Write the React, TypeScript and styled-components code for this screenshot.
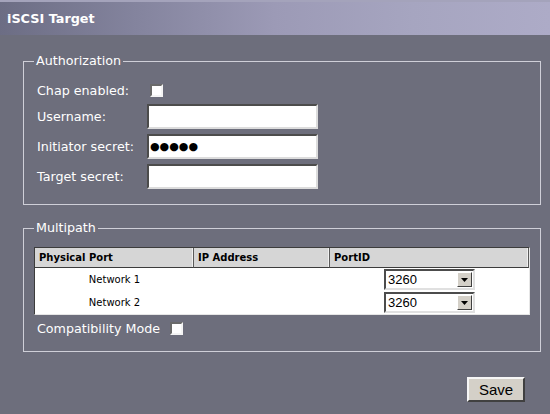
import React from "react";
import styled, { createGlobalStyle } from "styled-components";

const GlobalStyle = createGlobalStyle`
  html, body {
    margin: 0;
    padding: 0;
    background: #6d6e7c;
  }
  body {
    font-family: "DejaVu Sans", Verdana, sans-serif;
    font-size: 12.7px;
    color: #ffffff;
  }
`;

const Page = styled.div`
  width: 550px;
  height: 414px;
  background: #6d6e7c;
  overflow: hidden;
`;

const TitleBar = styled.div`
  height: 35px;
  display: flex;
  align-items: center;
  padding-left: 7px;
  box-sizing: border-box;
  border-top: 2px solid #a4a3bb;
  background: linear-gradient(90deg, #6c6d84 0%, #84849e 25%, #9c9ab6 50%, #a6a5c0 75%, #adabc7 100%);
  font-weight: bold;
  font-size: 12.8px;
  color: #ffffff;
`;

const Content = styled.div`
  display: flex;
  flex-direction: column;
  padding: 19px 9px 0 23px;
`;

const Group = styled.fieldset<{ $gap?: number; $inset: number }>`
  margin: ${(p) => p.$gap ?? 0}px 0 0 0;
  padding: ${(p) => (p.$gap ? "12px" : "13px")} 10px 15px ${(p) => p.$inset}px;
  border: 1px solid #cfcfd8;
  min-width: 0;
`;

const Legend = styled.legend<{ $shift: number }>`
  padding: 0 2px;
  margin-left: ${(p) => p.$shift}px;
  font-size: 12.7px;
  line-height: 14px;
  color: #ffffff;
`;

const FormGrid = styled.div`
  display: grid;
  grid-template-columns: 110px 171px;
  grid-template-rows: 18px repeat(3, 25px);
  row-gap: 5px;
  align-items: center;
`;

const Label = styled.label`
  font-size: 12.7px;
  color: #ffffff;
  white-space: nowrap;
`;

const Check = styled.input.attrs({ type: "checkbox" })`
  appearance: none;
  margin: 0;
  width: 13px;
  height: 13px;
  box-sizing: border-box;
  background: #ffffff;
  border-style: solid;
  border-width: 2px;
  border-color: #6a6a6a #f4f4f4 #f4f4f4 #6a6a6a;
  vertical-align: middle;
`;

const CheckCell = styled.div`
  display: flex;
  align-items: center;
  padding-left: 3px;
`;

const TextBox = styled.input<{ $secret?: boolean }>`
  width: 171px;
  height: 25px;
  box-sizing: border-box;
  margin: 0;
  padding: 0 ${(p) => (p.$secret ? "1px" : "3px")};
  border-style: solid;
  border-width: 2px;
  border-color: #4c4c4c #dcdcdc #dcdcdc #4c4c4c;
  background: #ffffff;
  font-family: "DejaVu Sans", sans-serif;
  font-size: ${(p) => (p.$secret ? "11px" : "12.7px")};
  color: #000000;
  outline: none;
`;

const Table = styled.div`
  display: grid;
  grid-template-columns: 159px 136px 1fr;
  width: 496px;
  box-sizing: border-box;
  background: #ffffff;
  border-style: solid;
  border-width: 1px;
  border-color: #3c3c3c #e6e6e6 #e6e6e6 #3c3c3c;
  color: #000000;
`;

const HeadCell = styled.div`
  height: 20px;
  display: flex;
  align-items: center;
  padding-left: 4px;
  box-sizing: border-box;
  background: #d6d6d6;
  border-bottom: 1px solid #3c3c3c;
  border-right: 1px solid #5a5a5a;
  box-shadow: inset -1px 0 0 #f0f0f0;
  font-weight: bold;
  font-size: 10px;
`;

const Cell = styled.div`
  height: 23px;
  display: flex;
  align-items: center;
  justify-content: center;
  font-size: 10px;
`;

const SelectWrap = styled.div`
  width: 91px;
  height: 21px;
  box-sizing: border-box;
  display: flex;
  align-items: center;
  border-style: solid;
  border-width: 2px;
  border-color: #4c4c4c #e0e0e0 #e0e0e0 #4c4c4c;
  background: #ffffff;
`;

const NativeSelect = styled.select`
  appearance: none;
  flex: 1;
  min-width: 0;
  height: 100%;
  border: none;
  outline: none;
  background: transparent;
  padding: 0 0 0 2px;
  font-family: "Liberation Sans", Arial, sans-serif;
  font-size: 13px;
  color: #000000;
`;

const ArrowButton = styled.span`
  width: 15px;
  height: 15px;
  margin-right: 1px;
  box-sizing: border-box;
  display: flex;
  align-items: center;
  justify-content: center;
  background: #d4d0c8;
  border-style: solid;
  border-width: 1px;
  border-color: #ffffff #404040 #404040 #ffffff;
  pointer-events: none;
`;

const CompatRow = styled.div`
  display: flex;
  align-items: center;
  gap: 10px;
  margin-top: 6px;
  margin-left: 3px;
`;

const Footer = styled.div`
  display: flex;
  justify-content: flex-end;
  padding-top: 25px;
  padding-right: 16px;
`;

const SaveButton = styled.button`
  width: 58px;
  height: 25px;
  box-sizing: border-box;
  padding: 0;
  background: #d4d0c8;
  border-style: solid;
  border-width: 2px;
  border-color: #f6f6f6 #404040 #404040 #f6f6f6;
  font-family: "Liberation Sans", Arial, sans-serif;
  font-size: 15px;
  color: #000000;
`;

const Arrow = () => (
  <svg width="7" height="4" viewBox="0 0 7 4">
    <path d="M0 0h7L3.5 4z" fill="#000" />
  </svg>
);

const PortSelect = () => (
  <SelectWrap>
    <NativeSelect defaultValue="3260">
      <option value="3260">3260</option>
    </NativeSelect>
    <ArrowButton>
      <Arrow />
    </ArrowButton>
  </SelectWrap>
);

const ports = ["Network 1", "Network 2"];

export default function App() {
  return (
    <Page>
      <GlobalStyle />
      <TitleBar>iSCSI Target</TitleBar>
      <Content>
        <Group $inset={13}>
          <Legend $shift={-3}>Authorization</Legend>
          <FormGrid>
            <Label>Chap enabled:</Label>
            <CheckCell>
              <Check />
            </CheckCell>
            <Label>Username:</Label>
            <TextBox type="text" />
            <Label>Initiator secret:</Label>
            <TextBox type="text" readOnly value="●●●●●" $secret />
            <Label>Target secret:</Label>
            <TextBox type="text" />
          </FormGrid>
        </Group>
        <Group $gap={16} $inset={10}>
          <Legend $shift={0}>Multipath</Legend>
          <Table>
            <HeadCell>Physical Port</HeadCell>
            <HeadCell>IP Address</HeadCell>
            <HeadCell>PortID</HeadCell>
            {ports.map((p) => (
              <React.Fragment key={p}>
                <Cell>{p}</Cell>
                <Cell />
                <Cell>
                  <PortSelect />
                </Cell>
              </React.Fragment>
            ))}
          </Table>
          <CompatRow>
            <Label>Compatibility Mode</Label>
            <Check />
          </CompatRow>
        </Group>
        <Footer>
          <SaveButton>Save</SaveButton>
        </Footer>
      </Content>
    </Page>
  );
}
